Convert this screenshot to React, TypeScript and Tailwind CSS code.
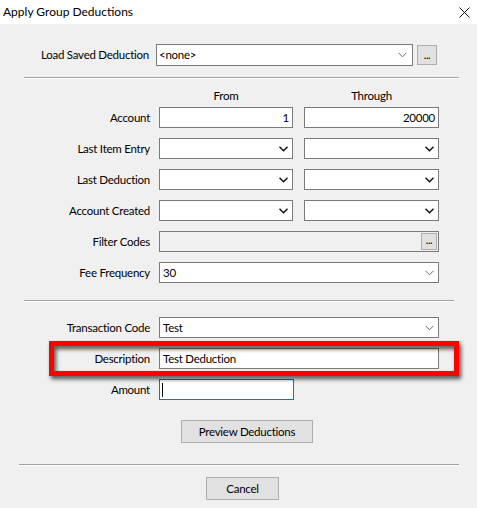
import React from "react";

const font = { fontFamily: 'Lato, "Noto Sans", Arial, sans-serif' };

function Chevron({ dark = false }: { dark?: boolean }) {
  return (
    <svg width="9" height="6" viewBox="0 0 9 6" className="shrink-0">
      <polyline
        points="0.5,0.8 4.5,4.8 8.5,0.8"
        fill="none"
        stroke={dark ? "#111" : "#6b6b6b"}
        strokeWidth={dark ? 1.5 : 1}
      />
    </svg>
  );
}

function Label({ children }: { children: React.ReactNode }) {
  return (
    <div className="w-[150px] shrink-0 text-right text-black leading-none">{children}</div>
  );
}

function Row({ label, children, className = "" }: { label: string; children: React.ReactNode; className?: string }) {
  return (
    <div className={`flex items-center h-[21px] ${className}`}>
      <Label>{label}</Label>
      <div className="ml-[9px] flex gap-[11px]">{children}</div>
    </div>
  );
}

function TextBox({ value = "", width, align = "left" }: { value?: string; width: string; align?: "left" | "right" }) {
  return (
    <div
      className={`h-[21px] ${width} bg-white border border-[#7a7a7a] flex items-center px-[3px] ${
        align === "right" ? "justify-end" : "justify-start"
      }`}
    >
      <span className="leading-none text-black">{value}</span>
    </div>
  );
}

function Dropdown({ value = "", width, dark = false }: { value?: string; width: string; dark?: boolean }) {
  return (
    <div className={`h-[21px] ${width} bg-white border border-[#7a7a7a] flex items-center justify-between pl-[3px] pr-[4px]`}>
      <span className="leading-none text-black">{value}</span>
      <Chevron dark={dark} />
    </div>
  );
}

function Separator({ className }: { className: string }) {
  return <div className={`h-[2px] border-t border-[#a0a0a0] border-b border-b-white ${className}`} />;
}

function DotsButton({ className }: { className: string }) {
  return (
    <div className={`bg-[#e1e1e1] border border-[#adadad] flex items-end justify-center ${className}`}>
      <span className="leading-none text-black text-[11px] pb-[4px] tracking-[-0.5px]">...</span>
    </div>
  );
}

export default function App() {
  return (
    <div
      className="w-[477px] h-[508px] bg-[#f0f0f0] overflow-hidden relative text-[11.5px] tracking-[-0.25px]"
      style={font}
    >
      {/* Title bar */}
      <div className="h-[24px] bg-white flex items-center justify-between pl-[3px] pr-[7px]">
        <span className="text-black text-[12px] tracking-normal leading-none">Apply Group Deductions</span>
        <svg width="11" height="11" viewBox="0 0 11 11">
          <line x1="0.5" y1="0.5" x2="10.5" y2="10.5" stroke="#111" strokeWidth="1" />
          <line x1="10.5" y1="0.5" x2="0.5" y2="10.5" stroke="#111" strokeWidth="1" />
        </svg>
      </div>

      {/* Saved deduction picker */}
      <div className="flex items-center h-[22px] mt-[20px]">
        <div className="w-[149px] shrink-0 text-right leading-none text-black">Load Saved Deduction</div>
        <div className="ml-[7px] h-[22px] w-[257px] bg-white border border-[#7a7a7a] flex items-center justify-between pl-[2px] pr-[5px]">
          <span className="leading-none text-black">&lt;none&gt;</span>
          <Chevron />
        </div>
        <DotsButton className="ml-[4px] w-[20px] h-[20px]" />
      </div>

      <Separator className="mt-[11px] ml-[24px] w-[435px]" />

      {/* Range headers */}
      <div className="flex h-[28px] pt-[9px]">
        <div className="ml-[159px] w-[134px] text-center leading-[16px] text-black">From</div>
        <div className="ml-[11px] w-[135px] text-center leading-[16px] text-black">Through</div>
      </div>

      <Row label="Account">
        <TextBox value="1" width="w-[134px]" align="right" />
        <TextBox value="20000" width="w-[135px]" align="right" />
      </Row>
      <Row label="Last Item Entry" className="mt-[10px]">
        <Dropdown width="w-[134px]" dark />
        <Dropdown width="w-[135px]" dark />
      </Row>
      <Row label="Last Deduction" className="mt-[10px]">
        <Dropdown width="w-[134px]" dark />
        <Dropdown width="w-[135px]" dark />
      </Row>
      <Row label="Account Created" className="mt-[10px]">
        <Dropdown width="w-[134px]" dark />
        <Dropdown width="w-[135px]" dark />
      </Row>
      <Row label="Filter Codes" className="mt-[10px]">
        <div className="h-[21px] w-[280px] bg-[#f0f0f0] border border-[#7a7a7a] flex items-center justify-end pr-[1px]">
          <DotsButton className="w-[16px] h-[17px]" />
        </div>
      </Row>
      <Row label="Fee Frequency" className="mt-[10px]">
        <Dropdown value="30" width="w-[280px]" />
      </Row>

      <Separator className="mt-[17px] ml-[24px] w-[430px]" />

      <Row label="Transaction Code" className="mt-[15px]">
        <Dropdown value="Test" width="w-[280px]" />
      </Row>
      <Row label="Description" className="mt-[10px]">
        <TextBox value="Test Deduction" width="w-[280px]" />
      </Row>
      <Row label="Amount" className="mt-[10px]">
        <div className="h-[21px] w-[135px] bg-white border border-[#0078d7] flex items-center pl-[2px]">
          <div className="w-px h-[14px] bg-black" />
        </div>
      </Row>

      <div className="mt-[20px] flex justify-center">
        <button className="ml-[17px] h-[23px] w-[132px] bg-[#e1e1e1] border border-[#adadad] text-black leading-none">
          Preview Deductions
        </button>
      </div>

      <Separator className="mt-[21px] ml-[19px] w-[440px]" />

      <div className="mt-[11px] flex">
        <button className="ml-[206px] h-[23px] w-[73px] bg-[#e1e1e1] border border-[#adadad] text-black leading-none">
          Cancel
        </button>
      </div>

      {/* Highlight callout drawn over the Description row */}
      <div className="absolute left-[49px] top-[341px] w-[410px] h-[35px] border-[5px] border-[#ff0000] pointer-events-none drop-shadow-[2px_3px_2px_rgba(0,0,0,0.7)]" />
    </div>
  );
}
